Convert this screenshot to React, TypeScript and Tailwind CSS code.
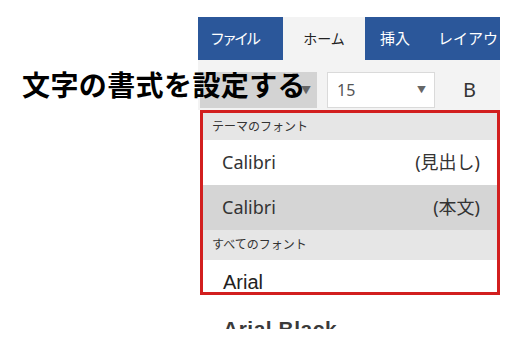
const jp = 'font-["Noto_Sans","Noto_Sans_CJK_JP",sans-serif]';

export default function App() {
  return (
    <div className={`relative w-[525px] h-[350px] overflow-hidden bg-white ${jp}`}>
      <div className="ml-[198px] w-[302px] pt-[17px] flex flex-col">
        {/* ribbon tabs */}
        <div className="flex h-[43px] text-[15px] leading-none">
          <div className="w-[85px] bg-[#2b579a] text-white flex items-center pl-[12px] tracking-[-3px]">ファイル</div>
          <div className="w-[82px] bg-[#f3f3f3] text-[#222] flex items-center justify-center text-[14px]">ホーム</div>
          <div className="flex-1 bg-[#2b579a] text-white flex items-center pl-[15px] overflow-hidden whitespace-nowrap">
            <span>挿入</span>
            <span className="ml-[28px]">レイアウト</span>
          </div>
        </div>

        {/* font row */}
        <div className="flex h-[50px] items-start bg-[#f3f3f3] pt-[12px]">
          <div className="ml-[2px] w-[117px] h-[36px] bg-[#d3d3d3] flex items-center justify-end pr-[6px]">
            <span className="text-[10px] text-[#666]">▼</span>
          </div>
          <div className="ml-[10px] w-[108px] h-[36px] bg-white border border-[#dadada] flex items-center justify-between pl-[9px] pr-[8px]">
            <span className="text-[16px] text-[#555]">15</span>
            <span className="text-[9px] text-[#666]">▼</span>
          </div>
          <div className="ml-[28px] h-[36px] flex items-center text-[20px] text-[#333]">B</div>
        </div>

        {/* font list */}
        <div className="ml-[2px] w-[300px] h-[185px] border-[3px] border-[#d21f1f] overflow-hidden flex flex-col bg-white">
          <div className="h-[27px] shrink-0 bg-[#e6e6e6] flex items-center pl-[9px] text-[12px] text-[#333]">テーマのフォント</div>
          <div className="h-[45px] shrink-0 bg-white flex items-center justify-between pl-[19px] pr-[17px] text-[18px] text-[#333]">
            <span>Calibri</span>
            <span>(見出し)</span>
          </div>
          <div className="h-[45px] shrink-0 bg-[#d5d5d5] flex items-center justify-between pl-[19px] pr-[17px] text-[18px] text-[#333]">
            <span>Calibri</span>
            <span>(本文)</span>
          </div>
          <div className="h-[30px] shrink-0 bg-[#e6e6e6] flex items-center pl-[9px] text-[12px] text-[#333]">すべてのフォント</div>
          <div className='flex-1 bg-white pt-[12px] pl-[20px] text-[20px] leading-none text-[#222] font-["Liberation_Sans",sans-serif]'>Arial</div>
        </div>

        <div className="h-[34px] overflow-hidden pt-[23px] pl-[25px]">
          <div className='text-[21px] leading-none font-black text-[#3a3a3a] font-["Liberation_Sans",sans-serif] tracking-[0.5px]'>Arial Black</div>
        </div>
      </div>

      {/* slide title overlaid on the ribbon */}
      <div className="absolute left-[22px] top-[71px] text-[28px] leading-none font-bold text-black whitespace-nowrap tracking-[0.4px]">
        文字の書式を設定する
      </div>
    </div>
  );
}
